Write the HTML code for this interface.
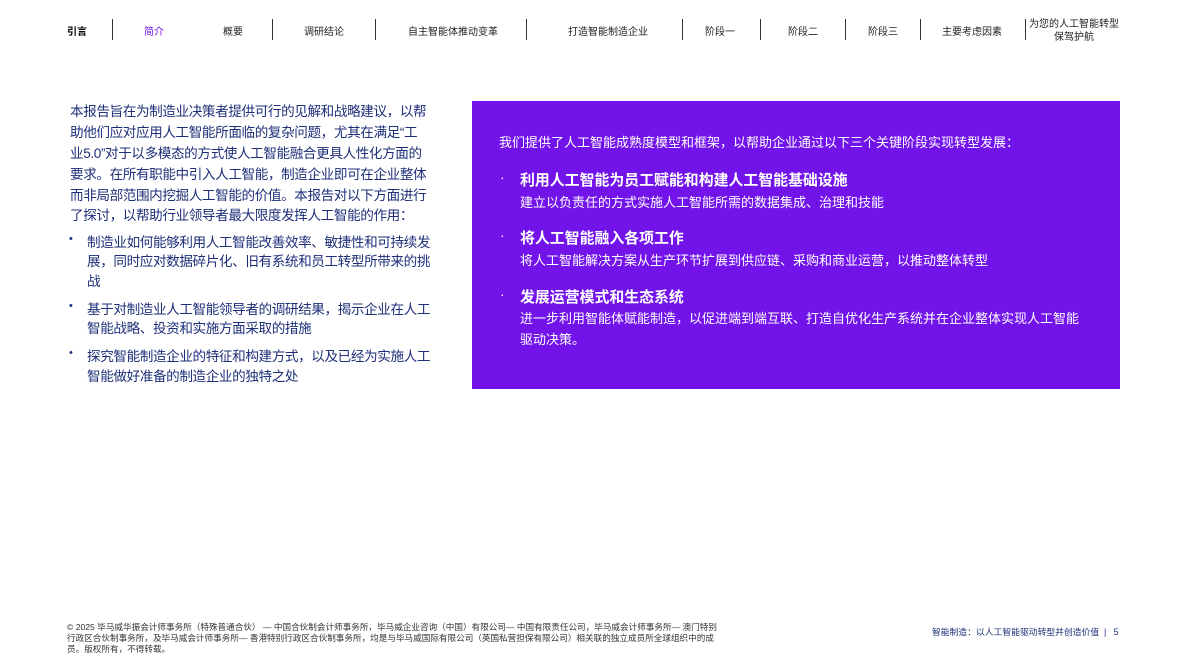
<!DOCTYPE html>
<html><head><meta charset="utf-8"><style>
*{margin:0;padding:0;box-sizing:border-box}
body{width:1190px;height:669px;background:#fff;position:relative;overflow:hidden;font-family:"Liberation Sans","Noto Sans CJK SC",sans-serif}
.n{position:absolute;top:23px;font-size:10px;color:#222;white-space:nowrap;transform:translateX(-50%)}
.s{position:absolute;top:19px;width:1px;height:21px;background:#333}
.l{position:absolute;left:70px;font-size:13.6px;color:#1e2f78;white-space:nowrap;letter-spacing:-0.4px}
.b{position:absolute;left:69px;font-size:11px;color:#1e2f78}
.p{position:absolute;left:472px;top:101px;width:648px;height:288px;background:#7213ea;color:#fff}
.p div{position:absolute;white-space:nowrap}
.f{position:absolute;font-size:8.6px;color:#333;white-space:nowrap}
</style></head><body>
<div class="n" style="left:77px;font-weight:bold;color:#000">引言</div>
<div class="s" style="left:112px"></div>
<div class="n" style="left:154px;color:#7213ea">简介</div>
<div class="s" style="left:272px"></div>
<div class="n" style="left:233px">概要</div>
<div class="n" style="left:324px">调研结论</div>
<div class="s" style="left:375px"></div>
<div class="n" style="left:453px">自主智能体推动变革</div>
<div class="s" style="left:526px"></div>
<div class="n" style="left:608px">打造智能制造企业</div>
<div class="s" style="left:682px"></div>
<div class="n" style="left:720px">阶段一</div>
<div class="s" style="left:760px"></div>
<div class="n" style="left:803px">阶段二</div>
<div class="s" style="left:845px"></div>
<div class="n" style="left:883px">阶段三</div>
<div class="s" style="left:920px"></div>
<div class="n" style="left:972px">主要考虑因素</div>
<div class="s" style="left:1025px"></div>
<div class="n" style="left:1074px;top:18px;text-align:center;line-height:13px">为您的人工智能转型<br>保驾护航</div>

<div class="l" style="top:100px">本报告旨在为制造业决策者提供可行的见解和战略建议，以帮</div>
<div class="l" style="top:121px">助他们应对应用人工智能所面临的复杂问题，尤其在满足“工</div>
<div class="l" style="top:142px">业5.0”对于以多模态的方式使人工智能融合更具人性化方面的</div>
<div class="l" style="top:163px">要求。在所有职能中引入人工智能，制造企业即可在企业整体</div>
<div class="l" style="top:184px">而非局部范围内挖掘人工智能的价值。本报告对以下方面进行</div>
<div class="l" style="top:204px">了探讨，以帮助行业领导者最大限度发挥人工智能的作用：</div>
<div class="b" style="top:233px">•</div>
<div class="l" style="top:231px;left:87px">制造业如何能够利用人工智能改善效率、敏捷性和可持续发</div>
<div class="l" style="top:250px;left:87px">展，同时应对数据碎片化、旧有系统和员工转型所带来的挑</div>
<div class="l" style="top:270px;left:87px">战</div>
<div class="b" style="top:300px">•</div>
<div class="l" style="top:298px;left:87px">基于对制造业人工智能领导者的调研结果，揭示企业在人工</div>
<div class="l" style="top:317px;left:87px">智能战略、投资和实施方面采取的措施</div>
<div class="b" style="top:347px">•</div>
<div class="l" style="top:345px;left:87px">探究智能制造企业的特征和构建方式，以及已经为实施人工</div>
<div class="l" style="top:365px;left:87px">智能做好准备的制造企业的独特之处</div>

<div class="p">
<div style="left:27px;top:31px;font-size:13px">我们提供了人工智能成熟度模型和框架，以帮助企业通过以下三个关键阶段实现转型发展：</div>
<div style="left:28px;top:68px;font-size:14px">·</div>
<div style="left:48px;top:68px;font-size:14.9px;font-weight:bold">利用人工智能为员工赋能和构建人工智能基础设施</div>
<div style="left:48px;top:91px;font-size:13px">建立以负责任的方式实施人工智能所需的数据集成、治理和技能</div>
<div style="left:28px;top:126px;font-size:14px">·</div>
<div style="left:48px;top:126px;font-size:14.9px;font-weight:bold">将人工智能融入各项工作</div>
<div style="left:48px;top:149px;font-size:13px">将人工智能解决方案从生产环节扩展到供应链、采购和商业运营，以推动整体转型</div>
<div style="left:28px;top:185px;font-size:14px">·</div>
<div style="left:48px;top:185px;font-size:14.9px;font-weight:bold">发展运营模式和生态系统</div>
<div style="left:48px;top:207px;font-size:13px">进一步利用智能体赋能制造，以促进端到端互联、打造自优化生产系统并在企业整体实现人工智能</div>
<div style="left:48px;top:228px;font-size:13px">驱动决策。</div>
</div>

<div class="f" style="left:67px;top:621px">© 2025 毕马威华振会计师事务所（特殊普通合伙） — 中国合伙制会计师事务所，毕马威企业咨询（中国）有限公司— 中国有限责任公司，毕马威会计师事务所— 澳门特别</div>
<div class="f" style="left:67px;top:632px">行政区合伙制事务所，及毕马威会计师事务所— 香港特别行政区合伙制事务所，均是与毕马威国际有限公司（英国私营担保有限公司）相关联的独立成员所全球组织中的成</div>
<div class="f" style="left:67px;top:643px">员。版权所有，不得转载。</div>
<div class="f" style="left:932px;top:625px;color:#1e2f78;font-size:8.8px">智能制造：以人工智能驱动转型并创造价值 &nbsp;|&nbsp;&nbsp; 5</div>
</body></html>
